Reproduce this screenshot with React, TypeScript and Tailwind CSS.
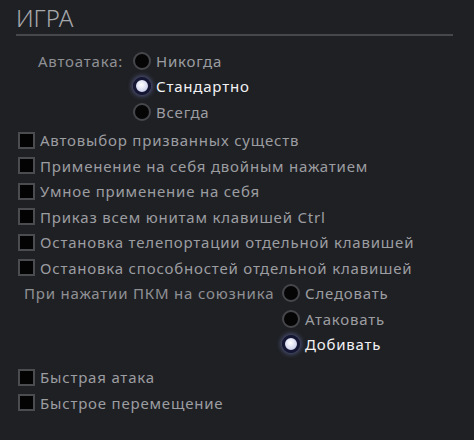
import React from 'react';

function Radio({ checked }: { checked?: boolean }) {
  if (checked) {
    return (
      <span className="w-[18px] h-[18px] rounded-full flex-shrink-0 border-[3px] border-[#141633] bg-[radial-gradient(circle_at_45%_40%,#ffffff_0%,#dfe2f4_45%,#b9bee0_100%)] shadow-[0_0_5px_1px_rgba(130,140,220,0.55)]" />
    );
  }
  return (
    <span className="w-[18px] h-[18px] rounded-full flex-shrink-0 border-2 border-[#46474b] bg-[#050506]" />
  );
}

function Checkbox() {
  return <span className="w-[17px] h-[17px] flex-shrink-0 border-2 border-[#4b4c50] bg-[#030304]" />;
}

function RadioRow({ label, checked }: { label: string; checked?: boolean }) {
  return (
    <div className="h-[25.5px] flex items-center gap-[5px]">
      <Radio checked={checked} />
      <span className={checked ? 'text-[#f2f2f4]' : 'text-[#9c9da1]'}>{label}</span>
    </div>
  );
}

function CheckRow({ label }: { label: string }) {
  return (
    <div className="h-[25.5px] flex items-center gap-[5px]">
      <Checkbox />
      <span className="text-[#9c9da1]">{label}</span>
    </div>
  );
}

export default function App() {
  const checks = [
    'Автовыбор призванных существ',
    'Применение на себя двойным нажатием',
    'Умное применение на себя',
    'Приказ всем юнитам клавишей Ctrl',
    'Остановка телепортации отдельной клавишей',
    'Остановка способностей отдельной клавишей',
  ];

  return (
    <div
      className="w-[474px] h-[440px] bg-[#1f2024] text-[15px] tracking-[0.8px] overflow-hidden"
      style={{ fontFamily: '"Noto Sans", "Open Sans", sans-serif' }}
    >
      <div className="pl-4 pr-[21px] pt-[3px]">
        <div className="border-b-2 border-[#47484c] pb-[1px]">
          <h1 className="text-[24px] font-light tracking-[0px] text-[#a7a8ac] leading-[30px]">ИГРА</h1>
        </div>
      </div>

      <div className="mt-[12px] flex pl-[38px]">
        <span className="h-[25.5px] flex items-center text-[#8f9094] w-[95px]">Автоатака:</span>
        <div className="flex flex-col">
          <RadioRow label="Никогда" />
          <RadioRow label="Стандартно" checked />
          <RadioRow label="Всегда" />
        </div>
      </div>

      <div className="mt-[3px] pl-[18px] flex flex-col">
        {checks.map((c) => (
          <CheckRow key={c} label={c} />
        ))}
      </div>

      <div className="flex pl-[24px]">
        <span className="h-[25.5px] flex items-center text-[#8f9094] w-[258px]">При нажатии ПКМ на союзника</span>
        <div className="flex flex-col">
          <RadioRow label="Следовать" />
          <RadioRow label="Атаковать" />
          <RadioRow label="Добивать" checked />
        </div>
      </div>

      <div className="mt-[7.5px] pl-[18px] flex flex-col">
        <CheckRow label="Быстрая атака" />
        <CheckRow label="Быстрое перемещение" />
      </div>
    </div>
  );
}
